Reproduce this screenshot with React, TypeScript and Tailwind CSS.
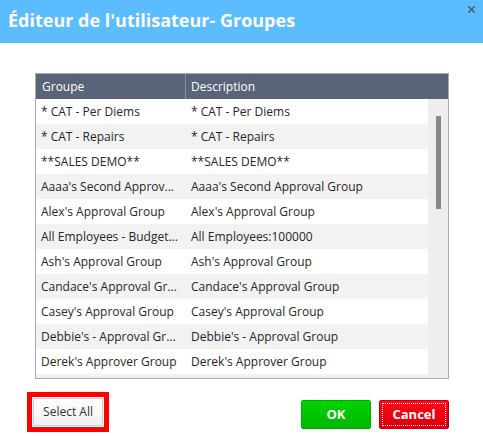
import { X } from "lucide-react";

const rows: [string, string][] = [
  ["* CAT - Per Diems", "* CAT - Per Diems"],
  ["* CAT - Repairs", "* CAT - Repairs"],
  ["**SALES DEMO**", "**SALES DEMO**"],
  ["Aaaa's Second Approv...", "Aaaa's Second Approval Group"],
  ["Alex's Approval Group", "Alex's Approval Group"],
  ["All Employees - Budget...", "All Employees:100000"],
  ["Ash's Approval Group", "Ash's Approval Group"],
  ["Candace's Approval Gr...", "Candace's Approval Group"],
  ["Casey's Approval Group", "Casey's Approval Group"],
  ["Debbie's - Approval Gr...", "Debbie's - Approval Group"],
  ["Derek's Approver Group", "Derek's Approver Group"],
  ["", ""],
];

export default function App() {
  return (
    <div className="w-[483px] h-[436px] bg-white flex flex-col font-['Open_Sans',sans-serif]">
      {/* title bar */}
      <div className="relative h-[43px] shrink-0 bg-[#5bbcff] flex items-center pl-[8px]">
        <h1 className="text-white font-bold text-[18px] leading-none -mt-[4px]">
          Éditeur de l'utilisateur- Groupes
        </h1>
        <X size={11} strokeWidth={3} className="absolute top-[4px] right-[6px] text-[#4a5566]" />
      </div>

      {/* grid */}
      <div className="mt-[30px] ml-[35px] w-[414px] border border-[#a3adb8] flex flex-col">
        <div className="h-[25px] bg-[#5a6478] flex text-white text-[12px] items-center">
          <div className="w-[150px] h-full flex items-center pl-[6px] border-r border-[#8a93a3]">Groupe</div>
          <div className="flex-1 pl-[5px]">Description</div>
        </div>
        <div className="flex h-[279px]">
          <div className="flex-1 overflow-hidden">
            {rows.map(([g, d], i) => (
              <div
                key={i}
                className={`h-[25px] flex items-center text-[12px] text-[#262626] ${i % 2 === 1 ? "bg-[#f2f2f2]" : "bg-white"}`}
              >
                <div className="w-[150px] pl-[5px] whitespace-nowrap overflow-hidden">{g}</div>
                <div className="flex-1 pl-[5px] whitespace-nowrap">{d}</div>
              </div>
            ))}
          </div>
          <div className="w-[20px] bg-[#eeeeee] pt-[17px] flex justify-center">
            <div className="w-[5px] h-[93px] bg-[#888888]" />
          </div>
        </div>
      </div>

      {/* footer */}
      <div className="flex items-start pl-[27px] pr-[34px] mt-[13px]">
        <div className="border-[5px] border-[#ff0000] p-px">
          <button className="w-[70px] h-[28px] border border-[#cfcfcf] bg-gradient-to-b from-white to-[#f0f0f0] text-[12px] text-[#333]">
            Select All
          </button>
        </div>
        <div className="flex-1" />
        <button className="mt-[8px] w-[70px] h-[29px] rounded-[2px] border border-[#00a800] bg-gradient-to-b from-[#00d400] to-[#00b800] text-white font-bold text-[13px]">
          OK
        </button>
        <button className="mt-[8px] ml-[8px] w-[70px] h-[29px] rounded-[2px] border border-[#c00010] bg-gradient-to-b from-[#ff0a14] to-[#d8000c] text-white font-bold text-[13px] p-[2px]">
          <span className="flex h-full w-full items-center justify-center border border-dotted border-white">Cancel</span>
        </button>
      </div>
    </div>
  );
}
